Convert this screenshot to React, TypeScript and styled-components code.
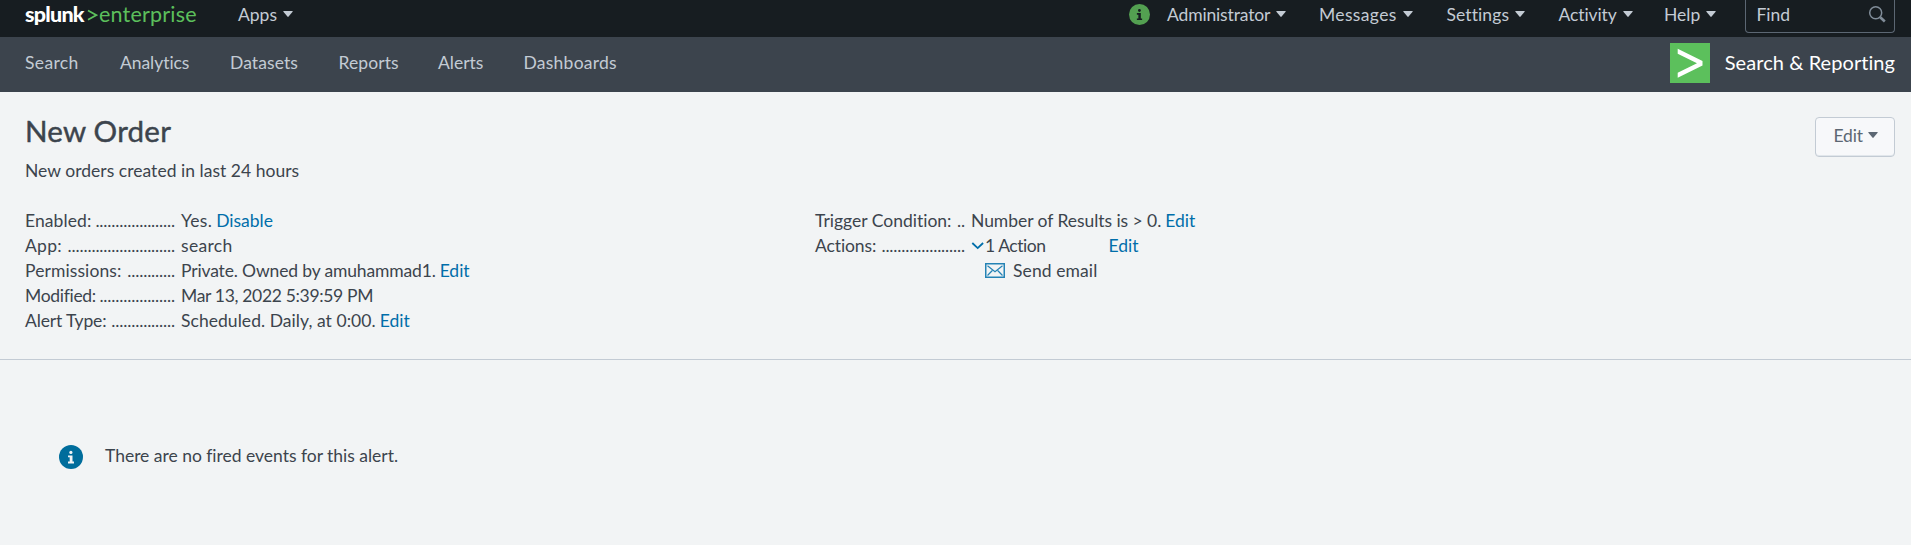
import React from 'react';
import styled, { createGlobalStyle } from 'styled-components';

const GlobalStyle = createGlobalStyle`
  * { box-sizing: border-box; }
  body {
    margin: 0;
    background: #f2f4f5;
    color: #3c444d;
    font: 17.5px/25px Lato, "Liberation Sans", sans-serif;
    font-variant-ligatures: none;
  }
`;

const Page = styled.div`
  min-height: 545px;
  white-space: nowrap;
`;

const Text = styled.span<{ $track?: number }>`
  letter-spacing: ${p => p.$track ?? 0}px;
`;

const TopBar = styled.header`
  display: flex;
  height: 37px;
  padding: 0 16px 4px 25px;
  background: #171d21;
  color: #c3cbd4;
`;

const Logo = styled.div`
  display: flex;
  width: 213px;
  font-size: 21.5px;
  line-height: 28px;
`;

const Brand = styled.span`
  width: 62px;
  color: #fff;
  font-weight: 900;
  letter-spacing: -0.75px;
`;

const LogoArrow = styled.svg`
  width: 11px;
  height: 28px;
  margin-right: 1px;
`;

const Product = styled.span`
  color: #5cc05c;
  letter-spacing: 0.2px;
`;

const Menu = styled.div<{ $width: number }>`
  display: flex;
  align-items: center;
  gap: 6px;
  width: ${p => p.$width}px;
  height: 28px;
`;

const CaretIcon = styled.svg`
  width: 10px;
  height: 6px;
`;

const MenuGroup = styled.div`
  display: flex;
  margin-left: auto;
`;

const InfoBadge = styled.svg<{ $size: number }>`
  width: ${p => p.$size}px;
  height: ${p => p.$size}px;
  flex: none;
`;

const BadgeSlot = styled.div`
  width: 38px;
  padding-top: 4px;
`;

const FindBox = styled.div`
  display: flex;
  justify-content: space-between;
  width: 150px;
  height: 33px;
  padding: 2px 8px 0 10.5px;
  border: 1px solid #5c6773;
  border-top: 0;
  border-radius: 0 0 4px 4px;
`;

const SearchIcon = styled.svg`
  width: 18px;
  height: 18px;
  margin-top: 3px;
`;

const NavBar = styled.nav`
  display: flex;
  height: 55px;
  padding: 0 16px 0 25px;
  background: #3c444d;
  color: #c3cbd4;
`;

const NavItem = styled.a<{ $width: number }>`
  width: ${p => p.$width}px;
  padding-top: 13px;
`;

const AppTitle = styled.div`
  display: flex;
  gap: 15px;
  margin-left: auto;
  padding-top: 6px;
  color: #fff;
  font-size: 20px;
  line-height: 39px;
`;

const AppMark = styled.svg`
  width: 40px;
  height: 40px;
`;

const Heading = styled.section`
  display: flex;
  justify-content: space-between;
  height: 116px;
  padding: 24px 16px 0 25px;
`;

const Title = styled.h1`
  margin: 0 0 12px;
  font-size: 29.5px;
  font-weight: 400;
  letter-spacing: 0.25px;
  line-height: 30px;
  -webkit-text-stroke: 0.45px #3c444d;
`;

const EditButton = styled.button`
  display: flex;
  align-items: center;
  gap: 5px;
  width: 80px;
  height: 40px;
  margin-top: 1px;
  padding: 0 0 4px 17.5px;
  border: 1px solid #c3cbd4;
  border-radius: 4px;
  background: #f7f8fa;
  box-shadow: inset 0 -1px 0 #e1e6eb;
  color: #5c6773;
  font: inherit;
`;

const Details = styled.section`
  display: grid;
  grid-template-columns: 790px 1fr;
  height: 152px;
  padding-left: 25px;
  border-bottom: 1px solid #c3cbd4;
`;

const Row = styled.div`
  display: flex;
  height: 25px;
`;

const Label = styled.div`
  display: flex;
  justify-content: space-between;
  width: 150px;
  margin-right: 6px;
`;

const Leader = styled.span`
  letter-spacing: -0.15px;
`;

const Link = styled.a<{ $gap?: number }>`
  margin-left: ${p => p.$gap ?? 4}px;
  color: #006eaa;
`;

const Chevron = styled.svg`
  width: 14px;
  height: 25px;
`;

const EmailRow = styled(Row)`
  gap: 8px;
  padding-left: 170px;
`;

const Envelope = styled.svg`
  width: 20px;
  height: 15px;
  margin-top: 5px;
`;

const EmptyMessage = styled.section`
  display: flex;
  align-items: flex-start;
  gap: 22px;
  padding: 85px 0 0 59px;
`;

const EmptyText = styled.p`
  margin: -2px 0 0;
  letter-spacing: -0.02px;
`;

const Caret = () => (
  <CaretIcon viewBox="0 0 10 6" fill="currentColor">
    <path d="M.8 0h8.4q.8 0 .4.7L5.6 5.6q-.6.6-1.2 0L.4.7Q0 0 .8 0Z" />
  </CaretIcon>
);

const Info = ({ size, fill, ink }: { size: number; fill: string; ink: string }) => (
  <InfoBadge $size={size} viewBox="0 0 24 24">
    <circle cx="12" cy="12" r="12" fill={fill} />
    <circle cx="11.9" cy="7.4" r="1.6" fill={ink} />
    <path d="M9 10.4h4.5v6.2H15v1.8H9v-1.8h1.7v-4.4H9Z" fill={ink} />
  </InfoBadge>
);

const topMenus = [
  { label: 'Administrator', width: 152, track: -0.15 },
  { label: 'Messages', width: 127.5, track: 0.35 },
  { label: 'Settings', width: 112, track: 0.1 },
  { label: 'Activity', width: 105.5, track: -0.1 },
  { label: 'Help', width: 81, track: 0 },
];

const navItems = [
  { label: 'Search', width: 95, track: 0.35 },
  { label: 'Analytics', width: 110, track: -0.05 },
  { label: 'Datasets', width: 108.5, track: 0.1 },
  { label: 'Reports', width: 99.5, track: 0.1 },
  { label: 'Alerts', width: 85.5, track: 0 },
  { label: 'Dashboards', width: 100, track: 0.25 },
];

const details = [
  { label: 'Enabled:', dots: 20, value: 'Yes.', link: 'Disable', track: 0.3, labelTrack: 0.1 },
  { label: 'App:', dots: 27, value: 'search', track: 0.3, labelTrack: 0.3 },
  { label: 'Permissions:', dots: 12, value: 'Private. Owned by amuhammad1.', link: 'Edit', track: -0.15, labelTrack: 0.1 },
  { label: 'Modified:', dots: 19, value: 'Mar 13, 2022 5:39:59 PM', track: -0.33, labelTrack: -0.3 },
  { label: 'Alert Type:', dots: 16, value: 'Scheduled. Daily, at 0:00.', link: 'Edit', track: 0.05, labelTrack: -0.15 },
];

export default function App() {
  return (
    <Page>
      <GlobalStyle />
      <TopBar>
        <Logo>
          <Brand>splunk</Brand>
          <LogoArrow viewBox="0 0 11 28" fill="none" stroke="#5cc05c" strokeWidth="1.8">
            <path d="M1 10.5 9.5 15.1 1 19.7" />
          </LogoArrow>
          <Product>enterprise</Product>
        </Logo>
        <Menu $width={70}><Text>Apps</Text><Caret /></Menu>
        <MenuGroup>
          <BadgeSlot><Info size={21} fill="#53a051" ink="#171d21" /></BadgeSlot>
          {topMenus.map(m => (
            <Menu key={m.label} $width={m.width}><Text $track={m.track}>{m.label}</Text><Caret /></Menu>
          ))}
          <FindBox>
            <Text>Find</Text>
            <SearchIcon viewBox="0 0 18 18" fill="none" stroke="#818d99">
              <circle cx="7.7" cy="7.7" r="6" strokeWidth="1.5" />
              <path d="m12.2 12.2 4.6 4.3" strokeWidth="2.6" />
            </SearchIcon>
          </FindBox>
        </MenuGroup>
      </TopBar>
      <NavBar>
        {navItems.map(n => (
          <NavItem key={n.label} $width={n.width}><Text $track={n.track}>{n.label}</Text></NavItem>
        ))}
        <AppTitle>
          <AppMark viewBox="0 0 40 40">
            <path fill="#5cc05c" d="M0 0h40v40H0z" />
            <path fill="#fff" d="M7.7 5.7 32.5 18v4.4L7.7 34.8v-5L27 20.2 7.7 10.8Z" />
          </AppMark>
          <Text $track={0.06}>Search &amp; Reporting</Text>
        </AppTitle>
      </NavBar>
      <Heading>
        <div>
          <Title>New Order</Title>
          <Text $track={0.03}>New orders created in last 24 hours</Text>
        </div>
        <EditButton><Text $track={-0.2}>Edit</Text><Caret /></EditButton>
      </Heading>
      <Details>
        <div>
          {details.map(d => (
            <Row key={d.label}>
              <Label><Text $track={d.labelTrack}>{d.label}</Text><Leader>{'.'.repeat(d.dots)}</Leader></Label>
              <Text $track={d.track}>{d.value}</Text>
              {d.link && <Link>{d.link}</Link>}
            </Row>
          ))}
        </div>
        <div>
          <Row>
            <Label><Text>Trigger Condition:</Text><Leader>..</Leader></Label>
            <Text $track={-0.05}>Number of Results is &gt; 0.</Text>
            <Link>Edit</Link>
          </Row>
          <Row>
            <Label><Text $track={-0.1}>Actions:</Text><Leader>{'.'.repeat(21)}</Leader></Label>
            <Chevron viewBox="0 0 14 25" fill="none" stroke="#006eaa" strokeWidth="1.8">
              <path d="m1.3 10 5.4 5.1 5.4-5.1" />
            </Chevron>
            <Text $track={-0.45}>1 Action</Text>
            <Link $gap={63}>Edit</Link>
          </Row>
          <EmailRow>
            <Envelope viewBox="0 0 20 15" fill="none" stroke="#2583b5" strokeWidth="1.5">
              <rect x=".75" y=".75" width="18.5" height="13.5" />
              <path d="m2.5 2.7 7.5 6 7.5-6M2.5 12.5l4.8-5M17.5 12.5l-4.8-5" strokeWidth="1.2" />
            </Envelope>
            <Text $track={0.1}>Send email</Text>
          </EmailRow>
        </div>
      </Details>
      <EmptyMessage>
        <Info size={24} fill="#006d9c" ink="#f2f4f5" />
        <EmptyText>There are no fired events for this alert.</EmptyText>
      </EmptyMessage>
    </Page>
  );
}
